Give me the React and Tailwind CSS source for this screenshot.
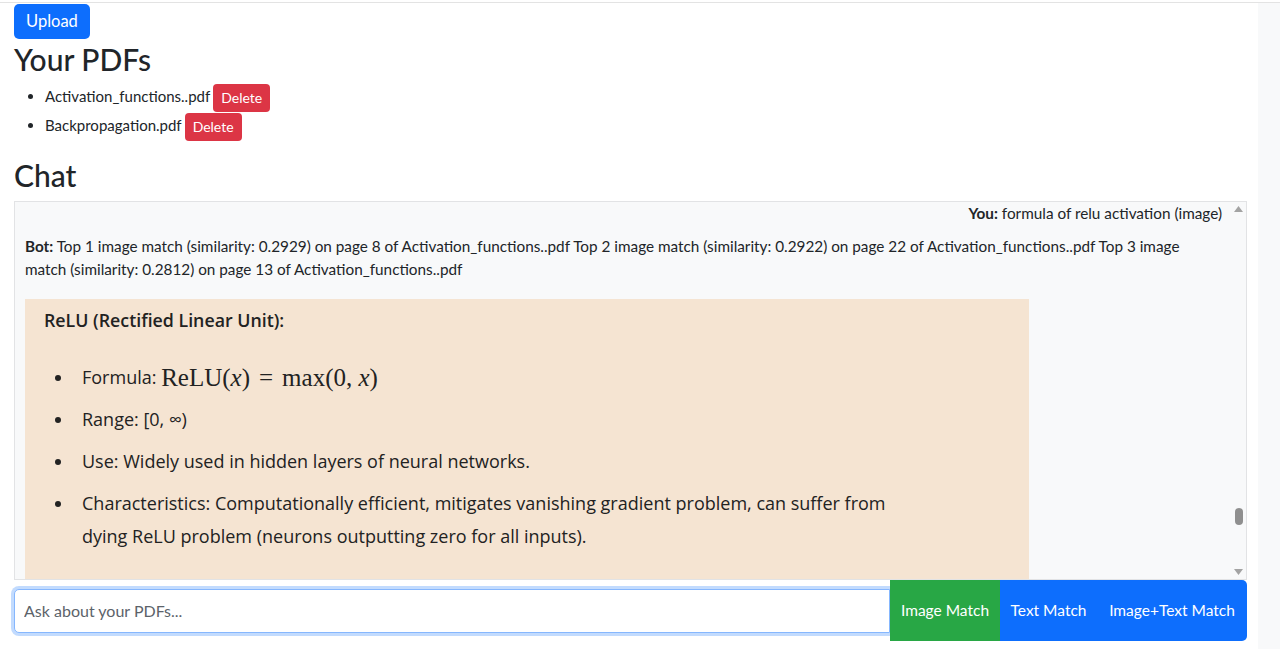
export default function App() {
  const pdfs = ["Activation_functions..pdf", "Backpropagation.pdf"];
  const points = [
    { key: "range", text: "Range: [0, ∞)" },
    { key: "use", text: "Use: Widely used in hidden layers of neural networks." },
  ];

  return (
    <div className="min-h-screen pt-[2px] bg-white font-['Lato',sans-serif] text-[#212529]">
      <div className="flex border-t border-[#e3e3e3] min-h-[647px]">
        <div className="w-[1258px] pl-[14px] pr-[11px] pt-[1px]">
          <button className="h-[35px] px-[12px] rounded-[5px] bg-[#0d6efd] text-white text-[16.5px] leading-none">
            Upload
          </button>

          <h3 className="mt-[1px] text-[30px] font-medium leading-[38px]">Your PDFs</h3>

          <ul className="mt-[4px] pl-[31px] list-disc text-[15px]">
            {pdfs.map((name) => (
              <li key={name} className="h-[29px] leading-[29px]">
                {name}
                <button className="ml-[3px] h-[28px] px-[8px] rounded-[4px] bg-[#dc3545] text-white text-[14px] leading-none align-middle">
                  Delete
                </button>
              </li>
            ))}
          </ul>

          <h3 className="mt-[16px] text-[30px] font-medium leading-[38px]">Chat</h3>

          {/* chat log */}
          <div className="mt-[7px] h-[379px] flex border border-[#e2e3e5] bg-[#f8f9fa] overflow-hidden">
            <div className="flex-1 pl-[10px] pr-[9px] text-[15.3px]">
              <div className="text-right leading-[23px]">
                <span className="font-bold">You:</span> formula of relu activation (image)
              </div>
              <div className="mt-[10px] leading-[23px]">
                <span className="font-bold">Bot:</span> Top 1 image match (similarity: 0.2929) on page 8 of
                Activation_functions..pdf Top 2 image match (similarity: 0.2922) on page 22 of
                Activation_functions..pdf Top 3 image match (similarity: 0.2812) on page 13 of
                Activation_functions..pdf
              </div>

              {/* picture of the matched page */}
              <div className="mt-[18px] w-[1004px] h-[320px] bg-[#f5e4d2] pl-[19px] pt-[8px] text-[#222] font-['Open_Sans',sans-serif]">
                <div className="text-[17.8px] font-semibold leading-[26px]">ReLU (Rectified Linear Unit):</div>
                <div className="mt-[32px] pl-[11px] text-[18px] flex flex-col gap-[17px]">
                  <div className="flex items-center h-[25px]">
                    <span className="w-[6px] h-[6px] rounded-full bg-[#222] mr-[21px] shrink-0" />
                    Formula:&nbsp;
                    <span className="font-['Liberation_Serif',serif] text-[25px] leading-none">
                      ReLU(<i>x</i>)<span className="mx-[9px]">=</span>max(0,&nbsp;<i>x</i>)
                    </span>
                  </div>
                  {points.map((p) => (
                    <div key={p.key} className="flex items-center h-[25px]">
                      <span className="w-[6px] h-[6px] rounded-full bg-[#222] mr-[21px] shrink-0" />
                      {p.text}
                    </div>
                  ))}
                  <div className="flex items-start">
                    <span className="w-[6px] h-[6px] rounded-full bg-[#222] mr-[21px] mt-[10px] shrink-0" />
                    <div className="w-[820px] leading-[33px] -mt-[4px]">
                      Characteristics: Computationally efficient, mitigates vanishing gradient problem, can suffer from
                      dying ReLU problem (neurons outputting zero for all inputs).
                    </div>
                  </div>
                </div>
              </div>
            </div>

            {/* scrollbar */}
            <div className="w-[15px] flex flex-col items-center justify-between py-[4px] bg-[#f8f9fa]">
              <svg width="9" height="6" viewBox="0 0 9 6">
                <path d="M4.5 0L9 6H0z" fill="#a3a3a3" />
              </svg>
              <div className="flex-1 flex flex-col justify-end pb-[44px]">
                <div className="w-[8px] h-[17px] rounded-full bg-[#8f8f8f]" />
              </div>
              <svg width="9" height="6" viewBox="0 0 9 6">
                <path d="M0 0H9L4.5 6z" fill="#a3a3a3" />
              </svg>
            </div>
          </div>

          {/* input row */}
          <div className="flex items-center h-[61px]">
            <input
              className="flex-1 h-[44px] px-[9px] rounded-l-[5px] border border-[#86b7fe] shadow-[0_0_0_3px_rgba(13,110,253,0.25)] bg-white text-[16px] outline-none placeholder:text-[#5c636a]"
              placeholder="Ask about your PDFs..."
            />
            <button className="h-[61px] w-[110px] bg-[#28a745] text-white text-[15.5px]">Image Match</button>
            <button className="h-[61px] w-[97px] bg-[#0d6efd] text-white text-[15.5px]">Text Match</button>
            <button className="h-[61px] w-[150px] bg-[#0d6efd] text-white text-[15.5px] rounded-r-[5px]">
              Image+Text Match
            </button>
          </div>
        </div>
        <div className="flex-1 bg-[#f8f9fa]" />
      </div>
    </div>
  );
}
